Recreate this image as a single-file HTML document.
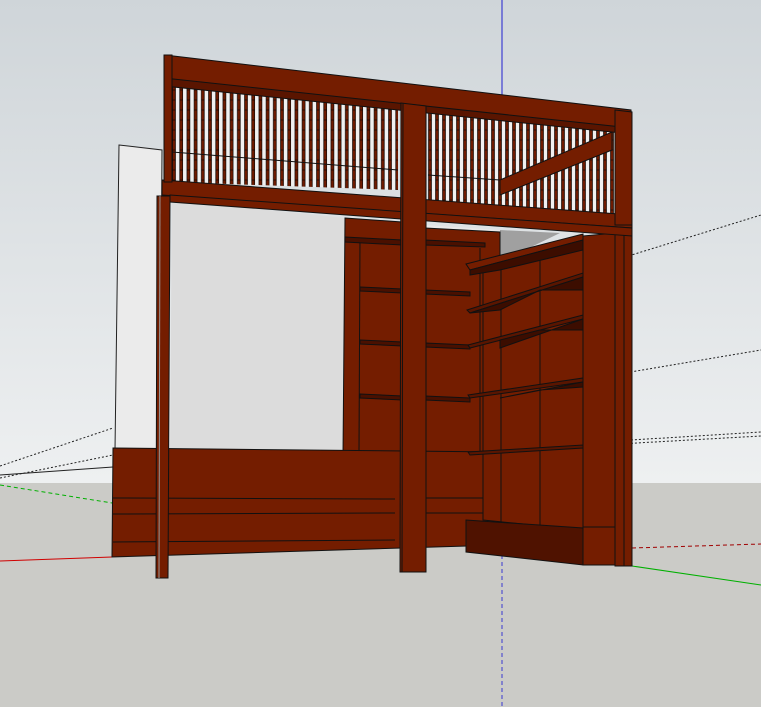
<!DOCTYPE html>
<html><head><meta charset="utf-8"><style>html,body{margin:0;padding:0;width:761px;height:707px;overflow:hidden;background:#dfe3e6}</style></head>
<body>
<svg width="761" height="707" viewBox="0 0 761 707" xmlns="http://www.w3.org/2000/svg">
<defs>
<linearGradient id="sky" x1="0" y1="0" x2="0" y2="1">
<stop offset="0" stop-color="#cfd5d9"/><stop offset="1" stop-color="#eef0f1"/>
</linearGradient>
<pattern id="bars" x="172" y="0" width="7.2" height="10" patternUnits="userSpaceOnUse">
<rect x="0" y="0" width="7.2" height="10" fill="#f0f0f0"/>
<rect x="0.5" y="0" width="3" height="10" fill="#6e1a00" stroke="#000" stroke-width="0.6"/>
</pattern>
<pattern id="bars2" x="428" y="0" width="7" height="10" patternUnits="userSpaceOnUse">
<rect x="0" y="0" width="7" height="10" fill="#f0f0f0"/>
<rect x="0.5" y="0" width="3" height="10" fill="#6e1a00" stroke="#000" stroke-width="0.6"/>
</pattern>
</defs>
<rect width="761" height="483" fill="url(#sky)"/>
<rect y="483" width="761" height="224" fill="#cbcbc7"/>
<!-- axes -->
<line x1="502" y1="0" x2="502" y2="110" stroke="#2020d0" stroke-width="1"/>
<line x1="502" y1="555" x2="502" y2="707" stroke="#3a3ad0" stroke-width="1" stroke-dasharray="4,3"/>
<line x1="632" y1="566" x2="761" y2="585" stroke="#00b000" stroke-width="1"/>
<line x1="0" y1="485" x2="112" y2="503" stroke="#00b000" stroke-width="1" stroke-dasharray="4,3"/>
<line x1="0" y1="561" x2="112" y2="557" stroke="#d00000" stroke-width="1"/>
<line x1="632" y1="548" x2="761" y2="544" stroke="#a00000" stroke-width="1" stroke-dasharray="4,3"/>
<g stroke="#222" stroke-width="1" stroke-dasharray="2,2">
<line x1="583" y1="270" x2="761" y2="215"/>
<line x1="583" y1="380" x2="761" y2="350"/>
<line x1="583" y1="443" x2="761" y2="432"/>
<line x1="583" y1="446" x2="761" y2="436"/>
<line x1="0" y1="466" x2="113" y2="428"/>
<line x1="0" y1="478" x2="113" y2="455"/>
</g>
<line x1="0" y1="475" x2="113" y2="467" stroke="#222"/>
<!-- left white wall -->
<polygon points="119,145 162,150 160,450 115,450" fill="#ebebeb" stroke="#222" stroke-width="1"/>
<!-- back opening -->
<polygon points="172,200 345,218 343,450 170,450" fill="#dcdcdc"/>
<polygon points="425,225 500,230 500,250 425,250" fill="#e8e8e8"/>
<polygon points="500,230 560,233 500,262" fill="#a0a0a0"/>
<!-- back bookshelf -->
<g stroke="#111" stroke-width="1" fill="#741d00">
<polygon points="345,218 402,222 402,455 343,455"/>
<line x1="360" y1="238" x2="359" y2="452"/>
<polygon points="425,228 500,232 500,455 425,455"/>
<line x1="480" y1="248" x2="480" y2="452"/>
<polygon points="345,237 402,240 402,245 345,242" fill="#4a1000"/>
<polygon points="360,287 402,289 402,293 360,291" fill="#4a1000"/>
<polygon points="360,340 402,342 402,346 360,344" fill="#4a1000"/>
<polygon points="360,394 402,396 402,400 360,398" fill="#4a1000"/>
<polygon points="425,240 485,243 485,247 425,245" fill="#4a1000"/>
<polygon points="425,290 470,292 470,296 425,294" fill="#4a1000"/>
<polygon points="425,343 470,345 470,349 425,347" fill="#4a1000"/>
<polygon points="425,396 470,398 470,402 425,400" fill="#4a1000"/>
</g>
<!-- bed base -->
<g stroke="#111" stroke-width="1" fill="#741d00">
<polygon points="113,448 500,452 500,545 112,557"/>
<line x1="113" y1="498" x2="395" y2="499"/>
<line x1="113" y1="514" x2="395" y2="513"/>
<line x1="113" y1="542" x2="395" y2="540"/>
<line x1="425" y1="498" x2="500" y2="498"/>
<line x1="425" y1="513" x2="500" y2="513"/>
</g>
<!-- right shelf unit -->
<g stroke="#111" stroke-width="1">
<polygon points="483,262 583,238 583,530 483,520" fill="#741d00"/>
<line x1="501" y1="267" x2="501" y2="522" stroke="#111"/>
<line x1="540" y1="258" x2="540" y2="525"/>
<polygon points="466,264 583,234 583,240 470,270" fill="#741d00"/>
<polygon points="470,270 583,240 583,250 500,270 470,275" fill="#3c0d00"/>
<polygon points="467,310 583,273 583,277 470,313" fill="#5a1500"/>
<polygon points="470,313 583,277 583,290 540,290 500,310" fill="#3c0d00"/>
<polygon points="468,345 583,315 583,319 470,348" fill="#5a1500"/>
<polygon points="500,348 583,319 583,330 540,330 500,340" fill="#3c0d00"/>
<polygon points="468,395 583,378 583,382 470,398" fill="#5a1500"/>
<polygon points="500,398 583,382 583,387 540,390" fill="#3c0d00"/>
<polygon points="468,452 583,445 583,448 470,455" fill="#5a1500"/>
<polygon points="583,236 615,233 615,565 583,565" fill="#741d00"/>
<line x1="583" y1="527" x2="615" y2="527"/>
<polygon points="466,520 583,528 583,565 466,552" fill="#4f1200"/>
<polygon points="615,225 632,225 632,566 615,566" fill="#741d00"/>
<line x1="624" y1="225" x2="624" y2="566"/>
</g>
<!-- balusters -->
<polygon points="172,82 398,106 398,190 172,182" fill="url(#bars)"/>
<polygon points="428,109 622,130 622,215 428,206" fill="url(#bars2)"/>
<polygon points="500,180 612,132 612,150 500,195" fill="#741d00" stroke="#111" stroke-width="1"/>
<line x1="172" y1="152" x2="398" y2="170" stroke="#111"/>
<line x1="428" y1="175" x2="500" y2="180" stroke="#111"/>
<g stroke="#111" stroke-width="1" fill="#741d00">
<!-- top beam -->
<polygon points="165,55 631,110 632,130 165,82"/>
<polygon points="164,78 631,128 631,134 164,86" fill="#5a1500"/>
<!-- lower beam -->
<polygon points="162,180 632,215 632,228 162,195"/>
<polygon points="170,195 632,228 632,236 170,202" fill="#741d00"/>
<!-- left post -->
<polygon points="164,55 172,55 172,182 164,182"/>
<polygon points="157,196 170,196 168,578 156,578"/>
<line x1="160" y1="196" x2="159" y2="578" stroke="#999"/>
<!-- middle post -->
<polygon points="401,103 426,106 426,572 400,572"/>
<line x1="403" y1="103" x2="402" y2="572"/>
<!-- right post top -->
<polygon points="615,110 632,112 632,225 615,225"/>
</g>
</svg>
</body></html>
